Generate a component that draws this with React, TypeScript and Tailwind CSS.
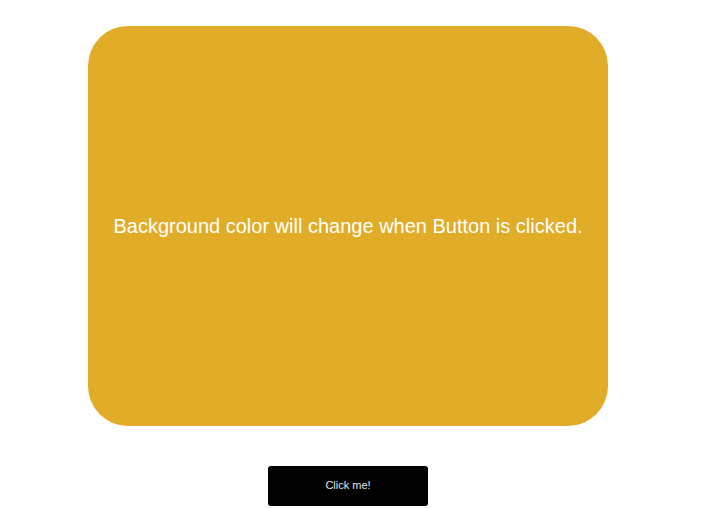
import React, { useState } from "react";

const colors = ["#e1ac27", "#3b82f6", "#10b981", "#ef4444", "#8b5cf6"];

const App = () => {
  const [index, setIndex] = useState(0);

  return (
    <div className="min-h-screen w-full bg-white font-['Liberation_Sans',Arial,sans-serif]">
      <div className="flex w-[520px] flex-col items-center pt-[26px] ml-[88px]">
        {/* Color box */}
        <div
          className="flex h-[400px] w-[520px] items-center justify-center rounded-[40px]"
          style={{ backgroundColor: colors[index] }}
        >
          <p className="text-[20px] text-white">
            Background color will change when Button is clicked.
          </p>
        </div>

        {/* Button */}
        <button
          onClick={() => setIndex((index + 1) % colors.length)}
          className="mt-[40px] h-[40px] w-[160px] rounded-[3px] bg-black pb-[1px] text-[11px] text-[#e5e5e5]"
        >
          Click me!
        </button>
      </div>
    </div>
  );
};

export default App;
